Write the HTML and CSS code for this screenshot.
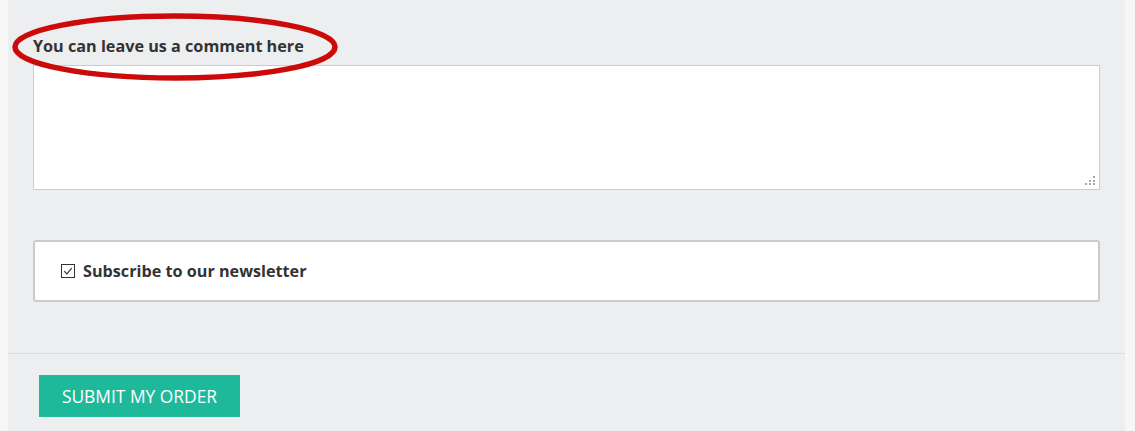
FILE: index.html
```html
<!DOCTYPE html>
<html>
<head>
<meta charset="utf-8">
<link rel="stylesheet" href="styles.css">
</head>
<body>
<div class="panel">
  <div class="fields">
    <div class="comment-group">
      <label class="comment-label" for="comment">You can leave us a comment here</label>
      <svg class="highlight" width="340" height="76" viewBox="0 0 340 76">
        <ellipse cx="167" cy="38" rx="160" ry="31" fill="none" stroke="#cc0a0a" stroke-width="5.5"/>
      </svg>
      <div class="comment-box">
        <textarea id="comment" class="comment"></textarea>
        <svg class="grip" width="12" height="12" viewBox="0 0 12 12">
          <rect x="9" y="1" width="2" height="2" fill="#a8a8a8"/>
          <rect x="5" y="5" width="2" height="2" fill="#a8a8a8"/>
          <rect x="9" y="5" width="2" height="2" fill="#a8a8a8"/>
          <rect x="1" y="8" width="2" height="2" fill="#a8a8a8"/>
          <rect x="5" y="8" width="2" height="2" fill="#a8a8a8"/>
          <rect x="9" y="8" width="2" height="2" fill="#a8a8a8"/>
        </svg>
      </div>
    </div>
    <div class="newsletter">
      <label class="check-label">
        <span class="checkbox">
          <svg width="14" height="14" viewBox="0 0 14 14"><rect x="0.5" y="0.5" width="13" height="13" fill="#fff" stroke="#333"/><path d="M3.2 7.2 L5.8 9.8 L10.8 4.2" fill="none" stroke="#333" stroke-width="1.2"/></svg>
        </span>
        Subscribe to our newsletter
      </label>
    </div>
  </div>
  <div class="actions">
    <button class="submit">SUBMIT MY ORDER</button>
  </div>
</div>
</body>
</html>
```
FILE: styles.css
```css
html, body {
  margin: 0;
  padding: 0;
  background: #f6f6f7;
  font-family: "Open Sans", "Liberation Sans", sans-serif;
  color: #333;
}
.panel {
  margin-left: 8px;
  width: 1117px;
  height: 431px;
  background: #edeef0;
}
.fields {
  padding: 36px 25px 51px 25px;
  display: flex;
  flex-direction: column;
  border-bottom: 1px solid #dcdde0;
}
.comment-group {
  position: relative;
  display: flex;
  flex-direction: column;
}
.comment-label {
  font-size: 16.2px;
  font-weight: 700;
  line-height: 20px;
  height: 29px;
  color: #333;
}
.highlight {
  position: absolute;
  left: -25px;
  top: -27px;
  z-index: 2;
  pointer-events: none;
}
.comment-box {
  position: relative;
  width: 1067px;
  height: 125px;
}
.comment {
  display: block;
  box-sizing: border-box;
  width: 1067px;
  height: 125px;
  border: 1px solid #cccccc;
  background: #fff;
  margin: 0;
  resize: none;
}
.grip {
  position: absolute;
  right: 4px;
  bottom: 3px;
}
.newsletter {
  margin-top: 50px;
  box-sizing: border-box;
  width: 1067px;
  height: 62px;
  background: #fff;
  border: 2px solid #cbcbcb;
  border-radius: 3px;
  display: flex;
  align-items: center;
  padding-left: 26px;
}
.check-label {
  display: flex;
  align-items: center;
  gap: 8px;
  font-size: 16.2px;
  font-weight: 700;
  color: #333;
}
.checkbox {
  display: flex;
  width: 14px;
  height: 14px;
}
.actions {
  padding: 21px 31px;
}
.submit {
  width: 201px;
  height: 42px;
  background: #1eb99b;
  border: none;
  color: #fff;
  font-family: "Open Sans", "Liberation Sans", sans-serif;
  font-size: 17.4px;
  padding: 0;
  cursor: pointer;
}
```
